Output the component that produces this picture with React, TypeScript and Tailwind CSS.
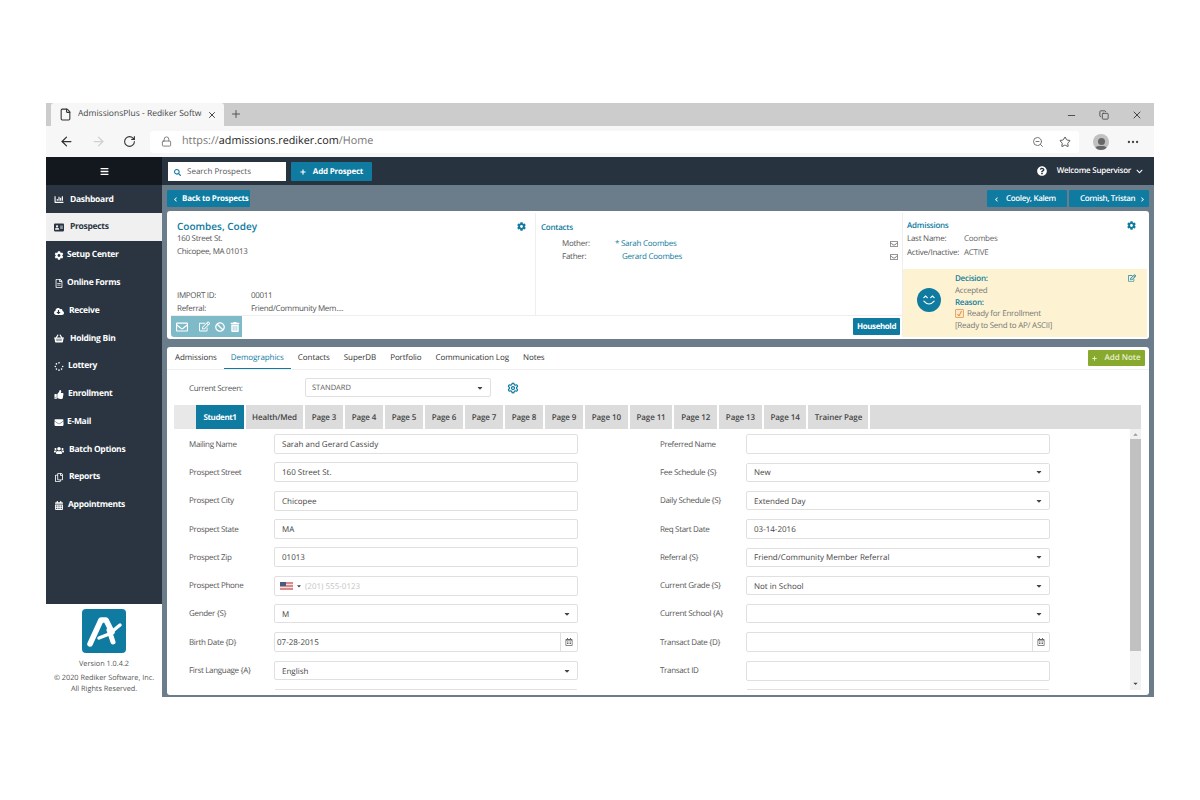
import React from "react";
import {
  FaChartBar, FaAddressCard, FaCog, FaRegFileAlt, FaCloudDownloadAlt, FaShoppingBasket, FaSpinner, FaThumbsUp,
  FaEnvelope, FaUsers, FaRegCopy, FaCalendarAlt, FaBars, FaSearch, FaPlus, FaChevronLeft, FaChevronRight,
  FaQuestionCircle, FaChevronDown, FaRegEnvelope, FaRegEdit, FaBan, FaTrashAlt, FaCaretDown, FaCaretUp, FaRegCalendarAlt,
} from "react-icons/fa";
import { ArrowLeft, ArrowRight, RotateCw, Lock, ZoomOut, Star, Minus, X, Copy, Plus, File, Ellipsis, Settings } from "lucide-react";

const nav: [string, React.ComponentType<{ className?: string }>, string][] = [
  ["Dashboard", FaChartBar, "mr-[6px]"],
  ["Prospects", FaAddressCard, "mr-[6px]"],
  ["Setup Center", FaCog, "mr-[3px]"],
  ["Online Forms", FaRegFileAlt, "mr-[3px]"],
  ["Receive", FaCloudDownloadAlt, "mr-[5px]"],
  ["Holding Bin", FaShoppingBasket, "mr-[6px]"],
  ["Lottery", FaSpinner, "mr-[4px]"],
  ["Enrollment", FaThumbsUp, "mr-[4px]"],
  ["E-Mail", FaEnvelope, "mr-[3px]"],
  ["Batch Options", FaUsers, "mr-[5px]"],
  ["Reports", FaRegCopy, "mr-[5px]"],
  ["Appointments", FaCalendarAlt, "mr-[4px]"],
];

const pageTabs: [string, string][] = [
  ["Health/Med", "w-[57px]"], ["Page 3", "w-[38px]"], ["Page 4", "w-[38px]"], ["Page 5", "w-[38px]"], ["Page 6", "w-[38px]"],
  ["Page 7", "w-[38px]"], ["Page 8", "w-[38px]"], ["Page 9", "w-[38px]"], ["Page 10", "w-[42.7px]"], ["Page 11", "w-[42.7px]"],
  ["Page 12", "w-[42.7px]"], ["Page 13", "w-[42.7px]"], ["Page 14", "w-[42.7px]"], ["Trainer Page", "w-[60px]"],
];

type Row = { label: string; value?: string; kind?: "text" | "select" | "date" | "phone" };
const left: Row[] = [
  { label: "Mailing Name", value: "Sarah and Gerard Cassidy" },
  { label: "Prospect Street", value: "160 Street St." },
  { label: "Prospect City", value: "Chicopee" },
  { label: "Prospect State", value: "MA" },
  { label: "Prospect Zip", value: "01013" },
  { label: "Prospect Phone", kind: "phone" },
  { label: "Gender {S}", value: "M", kind: "select" },
  { label: "Birth Date {D}", value: "07-28-2015", kind: "date" },
  { label: "First Language {A}", value: "English", kind: "select" },
  { label: "" },
];
const right: Row[] = [
  { label: "Preferred Name" },
  { label: "Fee Schedule {S}", value: "New", kind: "select" },
  { label: "Daily Schedule {S}", value: "Extended Day", kind: "select" },
  { label: "Req Start Date", value: "03-14-2016" },
  { label: "Referral {S}", value: "Friend/Community Member Referral", kind: "select" },
  { label: "Current Grade {S}", value: "Not in School", kind: "select" },
  { label: "Current School {A}", kind: "select" },
  { label: "Transact Date {D}", kind: "date" },
  { label: "Transact ID" },
  { label: "" },
];

function Field({ r, labelW }: { r: Row; labelW: string }) {
  const kind = r.kind ?? "text";
  return (
    <div className="flex items-center h-[28.3px] shrink-0">
      <div className={`${labelW} pl-[1px] pt-[1px] text-[8px] text-[#555] font-medium tracking-[-0.32px] shrink-0 whitespace-nowrap`}>{r.label}</div>
      <div className={`w-[304px] ${kind === "select" ? "h-[19px]" : "h-[20px]"} border border-[#e0e0e0] rounded-[2px] flex items-center bg-white text-[8px] text-[#444] font-medium shrink-0 ${kind === "date" ? "" : "pl-[7px]"}`}>
        {kind === "phone" ? (
          <>
            <svg width="13" height="8" viewBox="0 0 13 8" className="mr-[3px] ml-[-2px]">
              <rect width="13" height="8" fill="#d98a8a" />
              <rect y="2" width="13" height="1" fill="#f3e0e0" />
              <rect y="5" width="13" height="1" fill="#f3e0e0" />
              <rect width="6" height="4" fill="#4a5a80" />
            </svg>
            <FaCaretDown className="text-[6px] text-[#444] mr-[6px]" />
            <span className="text-[#c4c4c4] pt-[2px] -ml-[3px]">(201) 555-0123</span>
          </>
        ) : kind === "date" ? (
          <>
            <span className="pl-[2px] pt-[2px] flex-1">{r.value}</span>
            <span className="w-[17px] h-full border-l border-[#e0e0e0] flex items-center justify-center">
              <FaRegCalendarAlt className="text-[8px] text-[#666]" />
            </span>
          </>
        ) : (
          <>
            <span className="flex-1 pt-[2px]">{r.value}</span>
            {kind === "select" && <FaCaretDown className="text-[8px] text-[#444] mr-[6px]" />}
          </>
        )}
      </div>
    </div>
  );
}

export default function App() {
  return (
    <div className="w-[1200px] h-[800px] bg-white pt-[103px] pl-[46px] overflow-hidden [text-rendering:geometricPrecision]" style={{ fontFamily: '"Open Sans", "Noto Sans", sans-serif' }}>
      <div className="w-[1108px] h-[594px] flex flex-col">
        {/* Tab strip */}
        <div className="h-[23px] bg-[#cccccc] flex items-end shrink-0">
          <div className="ml-[5px] w-[173px] h-[23px] bg-[#f7f7f7] rounded-t-[3px] flex items-center pl-[8px] pr-[5px] text-[8.5px] text-[#444]">
            <File className="w-[13px] h-[13px] text-[#333] mr-[6px] shrink-0" />
            <span className="w-[124px] whitespace-nowrap overflow-hidden shrink-0">AdmissionsPlus - Rediker Softwa</span>
            <X className="w-[10px] h-[10px] text-[#222] ml-[5px] shrink-0" />
          </div>
          <Plus className="w-[12px] h-[12px] text-[#555] ml-[6px] mb-[6px]" />
          <div className="flex-1" />
          <div className="flex items-center gap-[22px] pr-[11px] pb-[5px] text-[#444]">
            <Minus className="w-[11px] h-[11px]" />
            <Copy className="w-[10px] h-[10px]" />
            <X className="w-[12px] h-[12px]" />
          </div>
        </div>
        {/* Address bar */}
        <div className="h-[31px] bg-[#f7f7f7] flex items-center shrink-0">
          <ArrowLeft className="w-[15px] h-[15px] text-[#333] ml-[13px]" />
          <ArrowRight className="w-[15px] h-[15px] text-[#d0d0d0] ml-[17px]" />
          <RotateCw className="w-[13px] h-[13px] text-[#333] ml-[17px]" />
          <div className="ml-[14px] w-[929px] h-[22px] bg-white rounded-[3px] flex items-center pl-[11px] pr-[8px]">
            <Lock className="w-[11px] h-[11px] text-[#777] mr-[10px]" />
            <span className="text-[10.8px] text-[#777] flex-1">
              https://<span className="text-[#222]">admissions.rediker.com</span>/Home
            </span>
            <ZoomOut className="w-[12px] h-[12px] text-[#777] mr-[15px]" />
            <Star className="w-[12px] h-[12px] text-[#555]" />
          </div>
          <div className="ml-[14px] w-[16px] h-[16px] rounded-full bg-[#c0c0c0] flex flex-col items-center justify-end overflow-hidden">
            <div className="w-[7px] h-[7px] rounded-full bg-[#666] mb-[1px]" />
            <div className="w-[12px] h-[4px] rounded-t-full bg-[#666]" />
          </div>
          <Ellipsis className="w-[14px] h-[14px] text-[#444] ml-[17px]" />
        </div>
        {/* App */}
        <div className="flex-1 flex min-h-0">
          {/* Sidebar */}
          <div className="w-[116px] flex flex-col shrink-0">
            <div className="h-[28px] bg-[#13181e] flex items-center justify-center text-white">
              <FaBars className="text-[9px]" />
            </div>
            <div className="h-[419px] bg-[#2a3541] flex flex-col">
              {nav.map(([label, Icon, gap]) => {
                const active = label === "Prospects";
                return (
                  <div key={label} className={`h-[27.8px] flex items-center pl-[8px] pt-[2px] text-[8.5px] tracking-[-0.3px] font-bold shrink-0 ${active ? "bg-[#f0f0f0] text-[#2a3541]" : "text-white"}`}>
                    <Icon className={`text-[9px] w-[10px] ${gap} shrink-0`} />
                    <span className="whitespace-nowrap">{label}</span>
                  </div>
                );
              })}
            </div>
            <div className="flex-1 bg-white flex flex-col items-center pt-[5px]">
              <svg width="44" height="44" viewBox="0 0 44 44">
                <rect width="44" height="44" rx="4" fill="#0f7ba0" />
                <path d="M8 35 L19 11 L24 11 L30 23" fill="none" stroke="#fff" strokeWidth="5.5" strokeLinecap="round" strokeLinejoin="round" />
                <path d="M17 29 L27 25 L38 16" fill="none" stroke="#fff" strokeWidth="3.5" strokeLinecap="round" />
                <path d="M27 21 L31 33" fill="none" stroke="#fff" strokeWidth="5" strokeLinecap="round" />
              </svg>
              <div className="text-[7.3px] text-[#555] mt-[6px] leading-[10px]">Version 1.0.4.2</div>
              <div className="text-[7.3px] text-[#555] mt-[4px] leading-[11px] text-center whitespace-nowrap">© 2020 Rediker Software, Inc.<br />All Rights Reserved.</div>
            </div>
          </div>
          {/* Main */}
          <div className="flex-1 min-w-0 flex flex-col bg-[#6b7c8b]">
            <div className="h-[28px] bg-[#283340] flex items-center pl-[6px] pr-[11px] shrink-0">
              <div className="w-[118px] h-[19px] bg-white flex items-center pl-[6px] pt-[2px] text-[8px] text-[#555] font-medium">
                <FaSearch className="text-[7px] text-[#0f7ba0] mr-[6px]" />Search Prospects
              </div>
              <div className="ml-[5px] w-[81px] h-[19px] bg-[#0f7ba0] flex items-center justify-center pt-[2px] text-white text-[8px] tracking-[-0.2px] font-bold rounded-[1px]">
                <FaPlus className="text-[6px] mr-[7px]" />Add Prospect
              </div>
              <div className="flex-1" />
              <FaQuestionCircle className="text-[10px] text-white mr-[10px]" />
              <span className="text-white text-[8px] tracking-[-0.25px] font-semibold">Welcome Supervisor</span>
              <FaChevronDown className="text-[7px] text-white ml-[5px]" />
            </div>
            <div className="h-[26px] flex items-center pl-[5px] pr-[5px] shrink-0">
              <div className="w-[83px] h-[17px] bg-[#0f7ba0] rounded-[1px] pt-[2px] text-white text-[8px] tracking-[-0.25px] font-bold flex items-center pl-[6px] whitespace-nowrap">
                <FaChevronLeft className="text-[5px] mr-[4px] shrink-0" />Back to Prospects
              </div>
              <div className="flex-1" />
              <div className="w-[80px] h-[17px] bg-[#0f7ba0] rounded-[1px] pt-[2px] text-white text-[8px] tracking-[-0.35px] font-semibold flex items-center pl-[7px] whitespace-nowrap">
                <FaChevronLeft className="text-[5px] mr-[7px] shrink-0" />Cooley, Kalem
              </div>
              <div className="ml-[2px] w-[80px] h-[17px] bg-[#0f7ba0] rounded-[1px] pt-[2px] text-white text-[8px] tracking-[-0.35px] font-semibold flex items-center pl-[11px] whitespace-nowrap">
                Cornish, Tristan<FaChevronRight className="text-[5px] ml-[5px] shrink-0" />
              </div>
            </div>
            {/* Summary card */}
            <div className="mx-[5px] h-[128px] bg-white rounded-[3px] py-[2px] pr-[2px] pl-[4px] flex shrink-0">
              <div className="w-[731px] flex flex-col shrink-0">
                <div className="flex-1 flex min-h-0">
                  <div className="w-[365px] border-r border-[#eee] pl-[6px] pr-[9px] pt-[5px] flex flex-col text-[8px] tracking-[-0.3px] text-[#555] font-medium shrink-0">
                    <div className="flex items-center justify-between">
                      <span className="text-[10px] tracking-normal text-[#0f7ba0] font-semibold leading-[16px]">Coombes, Codey</span>
                      <FaCog className="text-[9px] text-[#0f7ba0]" />
                    </div>
                    <div className="leading-[12.5px] -mt-[1px]">160 Street St.</div>
                    <div className="leading-[12.5px]">Chicopee, MA 01013</div>
                    <div className="flex-1" />
                    <div className="flex leading-[13px]"><span className="w-[74px]">IMPORT ID:</span>00011</div>
                    <div className="flex leading-[13px]"><span className="w-[74px]">Referral:</span>Friend/Community Mem....</div>
                  </div>
                  <div className="flex-1 pl-[5px] pr-[4px] pt-[9px] text-[8px] tracking-[-0.25px] font-medium">
                    <div className="text-[#0f7ba0] font-semibold leading-[12px]">Contacts</div>
                    <div className="flex items-center mt-[3px] h-[13px] pl-[21px] text-[#555]">
                      <span className="w-[53px]">Mother:</span>
                      <span className="text-[#0f7ba0] flex-1">* Sarah Coombes</span>
                      <FaRegEnvelope className="text-[8px] text-[#777]" />
                    </div>
                    <div className="flex items-center h-[13px] pl-[21px] text-[#555]">
                      <span className="w-[60px]">Father:</span>
                      <span className="text-[#0f7ba0] flex-1">Gerard Coombes</span>
                      <FaRegEnvelope className="text-[8px] text-[#777]" />
                    </div>
                  </div>
                </div>
                <div className="h-[22px] flex shrink-0 border-t border-[#eee]">
                  <div className="w-[71px] h-full bg-[#7fbac8] rounded-bl-[3px] flex items-center pl-[5px] text-white">
                    <FaRegEnvelope className="text-[12px] mr-[11px]" />
                    <FaRegEdit className="text-[11px] mr-[5px]" />
                    <FaBan className="text-[10px] mr-[5px]" />
                    <FaTrashAlt className="text-[10px]" />
                  </div>
                  <div className="flex-1" />
                  <div className="w-[47px] h-[17px] mt-[2px] mr-[2px] bg-[#0f7ba0] rounded-[1px] text-white text-[8px] tracking-[-0.4px] font-bold flex items-center justify-center">Household</div>
                </div>
              </div>
              <div className="flex-1 min-w-0 flex flex-col text-[8px] tracking-[-0.25px] font-medium text-[#555] border-l border-[#eee]">
                <div className="h-[56px] pl-[4px] pr-[11px] pt-[6px] shrink-0">
                  <div className="flex items-center justify-between leading-[13px]">
                    <span className="text-[#0f7ba0] font-semibold">Admissions</span>
                    <FaCog className="text-[9px] text-[#0f7ba0]" />
                  </div>
                  <div className="flex leading-[13px]"><span className="w-[57px]">Last Name:</span><span className="text-[#666]">Coombes</span></div>
                  <div className="flex leading-[13px] mt-[1px]"><span className="w-[57px]">Active/Inactive:</span><span className="text-[#666]">ACTIVE</span></div>
                </div>
                <div className="flex-1 bg-[#fdf3d2] flex pl-[14px] pr-[11px]">
                  <div className="w-[24px] h-[24px] rounded-full bg-[#0f7ba0] mt-[19px] shrink-0 flex items-center justify-center">
                    <svg width="16" height="14" viewBox="0 0 14 12" fill="none" stroke="#fff" strokeWidth="1" strokeLinecap="round">
                      <path d="M2.5 4 L4 2.5 L5.5 4" />
                      <path d="M8.5 4 L10 2.5 L11.5 4" />
                      <path d="M2.5 7 Q7 12 11.5 7" />
                    </svg>
                  </div>
                  <div className="ml-[14px] pt-[4px] flex-1 leading-[11.5px]">
                    <div className="text-[#0f7ba0] font-semibold">Decision:</div>
                    <div className="text-[#777] mt-[0.5px]">Accepted</div>
                    <div className="text-[#0f7ba0] font-semibold">Reason:</div>
                    <div className="flex items-center text-[#777]">
                      <span className="w-[9px] h-[9px] bg-[#fbe6c8] border border-[#e8a868] rounded-[1px] mr-[3px] flex items-center justify-center">
                        <svg width="7" height="7" viewBox="0 0 7 7" fill="none" stroke="#d89040" strokeWidth="1"><path d="M1.5 4 L3 6 L5.5 1" /></svg>
                      </span>
                      <span>Ready for Enrollment</span>
                    </div>
                    <div className="text-[#777]">[Ready to Send to AP/ ASCII]</div>
                  </div>
                  <FaRegEdit className="text-[8px] text-[#0f7ba0] mt-[5px]" />
                </div>
              </div>
            </div>
            <div className="h-[8px] shrink-0" />
            {/* Detail card */}
            <div className="mx-[5px] mb-[2px] flex-1 min-h-0 bg-white rounded-[3px] flex flex-col overflow-hidden">
              <div className="h-[23px] border-b border-[#f0f0f0] flex items-stretch pl-[1px] pr-[4px] text-[8px] tracking-[-0.08px] font-medium text-[#333] shrink-0">
                {["Admissions", "Demographics", "Contacts", "SuperDB", "Portfolio", "Communication Log", "Notes"].map((t) => (
                  <div key={t} className={`px-[7px] flex items-center ${t === "Demographics" ? "text-[#0f7ba0] border-b border-[#0f7ba0]" : ""}`}>{t}</div>
                ))}
                <div className="flex-1" />
                <div className="w-[57px] h-[16px] mt-[3px] bg-[#86a92e] rounded-[1px] text-[#e9f0d0] text-[8px] tracking-normal font-semibold flex items-center justify-center">
                  <FaPlus className="text-[5px] mr-[7px]" />Add Note
                </div>
              </div>
              <div className="h-[35px] flex items-center pl-[22px] text-[8px] font-medium tracking-[-0.32px] text-[#555] shrink-0">
                <span className="w-[116px] pt-[3px]">Current Screen:</span>
                <div className="w-[186px] h-[19px] border border-[#e0e0e0] rounded-[2px] flex items-center px-[6px] text-[7.5px] tracking-normal font-medium text-[#555]">
                  <span className="flex-1 pt-[3px]">STANDARD</span>
                  <FaCaretDown className="text-[8px] text-[#444]" />
                </div>
                <Settings className="w-[12px] h-[12px] text-[#0f7ba0] ml-[16px]" strokeWidth={2.5} />
              </div>
              <div className="ml-[7px] w-[967px] h-[24px] flex shrink-0 text-[8px] tracking-[-0.1px] font-semibold text-[#444]">
                <div className="w-[22px] bg-[#e8e8e8]" />
                <div className="w-[48px] bg-[#0f7ba0] text-white font-bold tracking-[-0.4px] flex items-center justify-center pt-[1px]">Student1</div>
                {pageTabs.map(([t, w]) => (
                  <div key={t} className={`${w} ml-[2px] pt-[1px] bg-[#dcdcdc] flex items-center justify-center whitespace-nowrap`}>{t}</div>
                ))}
                <div className="ml-[2px] flex-1 bg-[#dcdcdc]" />
              </div>
              <div className="flex h-[261px] shrink-0 overflow-hidden pl-[21px] pr-[8px]">
                <div className="flex flex-1 min-w-0 pt-[1px]">
                  <div className="w-[471px] flex flex-col shrink-0">
                    {left.map((r, i) => <Field key={i} r={r} labelW="w-[86px]" />)}
                  </div>
                  <div className="flex flex-col">
                    {right.map((r, i) => <Field key={i} r={r} labelW="w-[87px]" />)}
                  </div>
                </div>
                <div className="w-[11px] h-[261px] bg-[#f1f1f1] flex flex-col items-center shrink-0">
                  <div className="h-[10px] flex items-center"><FaCaretUp className="text-[7px] text-[#999]" /></div>
                  <div className="w-full h-[212px] bg-[#c1c1c1]" />
                  <div className="flex-1" />
                  <div className="h-[13px] flex items-center"><FaCaretDown className="text-[7px] text-[#444]" /></div>
                </div>
              </div>
            </div>
          </div>
        </div>
      </div>
    </div>
  );
}
